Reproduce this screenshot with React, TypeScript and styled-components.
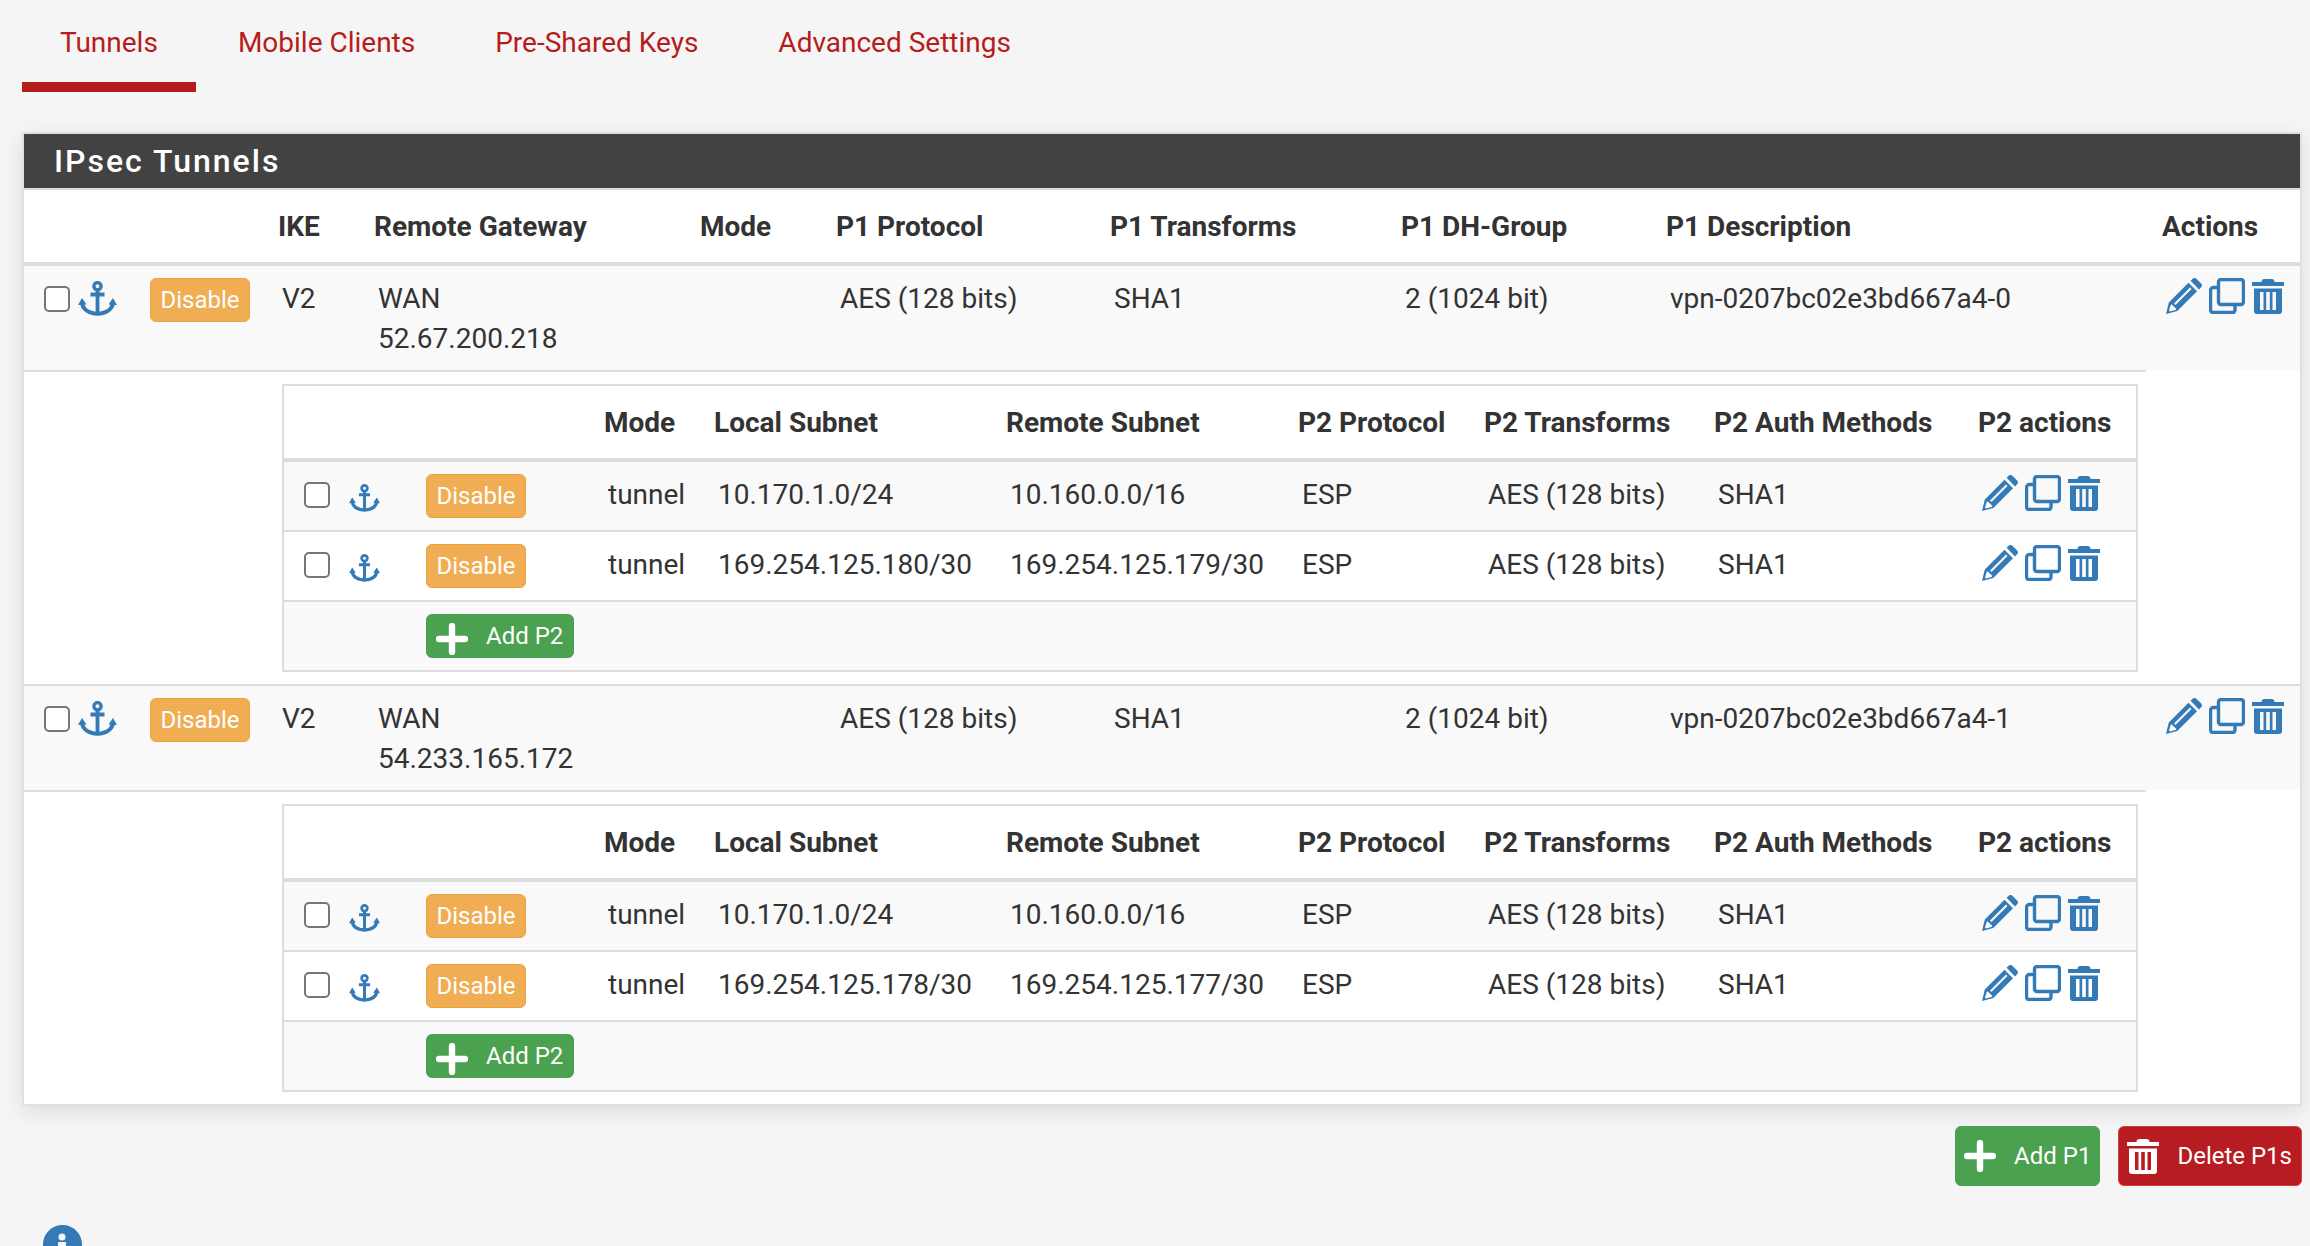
import React from "react";
import styled, { createGlobalStyle } from "styled-components";

const Global = createGlobalStyle`
  html, body { margin: 0; height: 1246px; overflow: hidden; background: #f5f5f5; }
  body { font-family: Roboto, "Liberation Sans", sans-serif; color: #333; }
`;

const Page = styled.div`
  width: 2310px;
  height: 1246px;
  overflow: hidden;
  box-sizing: border-box;
  padding-left: 22px;
`;
const Tabs = styled.nav`
  display: flex;
  gap: 4px;
  height: 92px;
`;
const Tab = styled.a<{ $active?: boolean }>`
  display: block;
  box-sizing: border-box;
  height: 92px;
  padding: 25px 38px 0;
  font-size: 28px;
  line-height: 36px;
  color: #b71c1c;
  border-bottom: 10px solid ${(p) => (p.$active ? "#b71c1c" : "transparent")};
`;
const Panel = styled.section`
  margin-top: 40px;
  width: 2280px;
  box-sizing: border-box;
  border: 2px solid #e0e0e0;
  background: #fff;
  box-shadow: 0 6px 20px rgba(0, 0, 0, 0.1);
`;
const Heading = styled.h2`
  margin: 0;
  height: 56px;
  box-sizing: border-box;
  background: #424242;
  border-bottom: 2px solid #ddd;
  color: #fff;
  padding-left: 30px;
  font-size: 32px;
  font-weight: 500;
  line-height: 54px;
  letter-spacing: 2px;
`;
const Table = styled.table`
  border-collapse: separate;
  border-spacing: 0;
  table-layout: fixed;
  width: 100%;
`;
const Th = styled.th<{ $pad?: number }>`
  text-align: left;
  font-weight: 700;
  font-size: 28px;
  line-height: 40px;
  color: #333;
  white-space: nowrap;
  padding: 17px 0 15px ${(p) => p.$pad ?? 8}px;
  border-bottom: 4px solid #ddd;
  background: #fff;
`;
const Td = styled.td<{ $pad?: number; $noLine?: boolean }>`
  font-size: 28px;
  line-height: 40px;
  color: #333;
  vertical-align: top;
  white-space: nowrap;
  padding: 13px 0 11px ${(p) => p.$pad ?? 12}px;
  border-bottom: 2px solid ${(p) => (p.$noLine ? "#fff" : "#ddd")};
`;
const Row = styled.tr<{ $shade?: boolean }>`
  background: ${(p) => (p.$shade ? "#f9f9f9" : "#fff")};
`;
const DetailCell = styled.td<{ $line?: boolean }>`
  padding: 12px 8px 12px 258px;
  border-bottom: ${(p) => (p.$line ? "2px solid #ddd" : "0")};
`;
const EndCell = styled.td<{ $line?: boolean }>`
  border-bottom: ${(p) => (p.$line ? "2px solid #ddd" : "0")};
`;
const Nested = styled.div`
  border: 2px solid #ddd;
`;
const NestedHead = styled.th`
  text-align: left;
  font-weight: 700;
  font-size: 28px;
  line-height: 40px;
  color: #333;
  white-space: nowrap;
  padding: 17px 0 15px 8px;
  border-bottom: 4px solid #ddd;
`;
const NestedTd = styled.td`
  height: 70px;
  box-sizing: border-box;
  font-size: 28px;
  line-height: 40px;
  color: #333;
  white-space: nowrap;
  vertical-align: top;
  padding: 13px 0 0 12px;
  border-bottom: 2px solid #ddd;
`;
const NestedFoot = styled.td`
  height: 68px;
  box-sizing: border-box;
  padding: 12px 0 12px 142px;
`;
const Controls = styled.div<{ $nested?: boolean }>`
  display: grid;
  grid-template-columns: ${(p) => (p.$nested ? "26px 45px" : "26px 34px")} auto;
  justify-content: start;
  column-gap: ${(p) => (p.$nested ? "19px" : "8px")};
  margin: -1px 0 0 8px;
`;
const Check = styled.input.attrs({ type: "checkbox" })`
  appearance: none;
  width: 26px;
  height: 26px;
  margin: 8px 0 0;
  box-sizing: border-box;
  background: #fff;
  border: 2px solid #767676;
  border-radius: 5px;
`;
const AnchorSvg = styled.svg<{ $small?: boolean }>`
  display: block;
  width: ${(p) => (p.$small ? 31 : 39)}px;
  height: ${(p) => (p.$small ? 28 : 35)}px;
  margin-top: ${(p) => (p.$small ? 10 : 3)}px;
  fill: none;
  stroke: #337ab7;
`;
const DisableBtn = styled.span<{ $nested?: boolean }>`
  display: block;
  width: 100px;
  height: 44px;
  box-sizing: border-box;
  margin-left: ${(p) => (p.$nested ? "13px" : "30px")};
  background: #f0ad54;
  border: 1px solid #eea236;
  border-radius: 6px;
  color: #fff;
  font-size: 24px;
  line-height: 42px;
  text-align: center;
`;
const Btn = styled.span<{ $tone: "add" | "del"; $large?: boolean; $right: number; $left: number }>`
  display: inline-flex;
  align-items: center;
  vertical-align: top;
  box-sizing: border-box;
  height: ${(p) => (p.$large ? 60 : 44)}px;
  padding: 0 ${(p) => p.$right}px 0 ${(p) => p.$left}px;
  border-radius: 6px;
  color: #fff;
  background: ${(p) => (p.$tone === "add" ? "#4aa14f" : "#b71c22")};
  border: 1px solid ${(p) => (p.$tone === "add" ? "#4aa14f" : "#d43f3a")};
  font-size: 24px;
  line-height: 1;
  white-space: nowrap;
`;
const BtnIcon = styled.svg<{ $drop?: boolean }>`
  display: block;
  flex: none;
  fill: #fff;
  margin: ${(p) => (p.$drop ? "5px" : "0")} 18px 0 0;
`;
const Actions = styled.div<{ $outer?: boolean }>`
  display: flex;
  align-items: flex-start;
  gap: 7px;
  height: 36px;
  margin-top: ${(p) => (p.$outer ? -1 : 0)}px;
`;
const Icon = styled.svg<{ $w: number }>`
  display: block;
  flex: none;
  width: ${(p) => p.$w}px;
  height: 36px;
  fill: #337ab7;
`;
const Footer = styled.div`
  display: flex;
  justify-content: flex-end;
  gap: 18px;
  width: 2280px;
  margin-top: 20px;
`;
const InfoWrap = styled.svg`
  display: block;
  width: 39px;
  height: 39px;
  margin: 39px 0 0 21px;
`;

const Anchor = ({ small }: { small?: boolean }) => (
  <AnchorSvg $small={small} viewBox="0 0 39 35">
    <circle cx="19.5" cy="5.2" r="3.6" strokeWidth="3.4" />
    <path d="M19.5 9v23M12.5 13.5h14" strokeWidth="3.800" />
    <path d="M4 21.5c.6 7 7 10.8 15.5 11.3C28 32.300 34.400 28.500 35 21.500" strokeWidth="4" />
    <path d="M0 24l4-7 4.500 6.500zM30.500 23.500l4.500-6.500 4 7z" fill="#337ab7" stroke="none" />
  </AnchorSvg>
);
const Pencil = () => (
  <Icon $w={36} viewBox="0 0 36 36">
    <path d="M0 36l2.800-11.500L22.500 4.800 31 13.300 11.300 33zM4.500 27.500l-1.500 5.200 1 .9 5.300-1.500 1.200-1.200-5-4.600z" fillRule="evenodd" />
    <path d="M24.600 2.800l1.800-1.800a3 3 0 0 1 4.200 0l4.300 4.300a3 3 0 0 1 0 4.200l-1.900 1.900z" />
    <path d="M8 25.500L24 9.500l1.500 1.500L9.500 27z" fill="#f9f9f9" />
  </Icon>
);
const Copy = () => (
  <Icon $w={36} viewBox="0 0 36 36">
    <path d="M8 9.500H4.500a3 3 0 0 0-3 3V32a2.500 2.500 0 0 0 2.500 2.500h19.500A2.500 2.500 0 0 0 26 32v-5.500" fill="none" stroke="#337ab7" strokeWidth="3.400" />
    <rect x="9.500" y="1.500" width="25" height="25" rx="2.500" fill="none" stroke="#337ab7" strokeWidth="3.400" />
  </Icon>
);
const trashPath =
  "M0 4h9.500a3 3 0 0 1 3-3h7a3 3 0 0 1 3 3H32v4H0zM2 10.500h28V33a3 3 0 0 1-3 3H5a3 3 0 0 1-3-3zM8 14v18h3.500V14zM14.200 14v18h3.600V14zM20.500 14v18H24V14z";
const Trash = () => (
  <Icon $w={32} viewBox="0 0 32 36">
    <path d={trashPath} fillRule="evenodd" />
  </Icon>
);
const ActionIcons = ({ outer }: { outer?: boolean }) => (
  <Actions $outer={outer}>
    <Pencil />
    <Copy />
    <Trash />
  </Actions>
);
const Plus = ({ drop }: { drop?: boolean }) => (
  <BtnIcon $drop={drop} width={32} height={32} viewBox="0 0 32 32">
    <path d="M12.800 3a3 3 0 0 1 6.400 0v9.800H29a3 3 0 0 1 0 6.400h-9.800V29a3 3 0 0 1-6.400 0v-9.800H3a3 3 0 0 1 0-6.400h9.800z" />
  </BtnIcon>
);

type P2 = { local: string; remote: string };
type P1 = { gateway: string; desc: string; p2: P2[] };

const tunnels: P1[] = [
  {
    gateway: "52.67.200.218",
    desc: "vpn-0207bc02e3bd667a4-0",
    p2: [
      { local: "10.170.1.0/24", remote: "10.160.0.0/16" },
      { local: "169.254.125.180/30", remote: "169.254.125.179/30" },
    ],
  },
  {
    gateway: "54.233.165.172",
    desc: "vpn-0207bc02e3bd667a4-1",
    p2: [
      { local: "10.170.1.0/24", remote: "10.160.0.0/16" },
      { local: "169.254.125.178/30", remote: "169.254.125.177/30" },
    ],
  },
];

const outerCols = [246, 96, 326, 136, 274, 291, 265, 488, 154];
const innerCols = [312, 110, 292, 292, 186, 230, 264, 166];

const NestedTable = ({ rows }: { rows: P2[] }) => (
  <Nested>
    <Table>
      <colgroup>
        {innerCols.map((w, i) => (
          <col key={i} style={{ width: w }} />
        ))}
      </colgroup>
      <thead>
        <tr>
          <NestedHead />
          <NestedHead>Mode</NestedHead>
          <NestedHead>Local Subnet</NestedHead>
          <NestedHead>Remote Subnet</NestedHead>
          <NestedHead>P2 Protocol</NestedHead>
          <NestedHead>P2 Transforms</NestedHead>
          <NestedHead>P2 Auth Methods</NestedHead>
          <NestedHead>P2 actions</NestedHead>
        </tr>
      </thead>
      <tbody>
        {rows.map((r, i) => (
          <Row key={i} $shade={i % 2 === 0}>
            <NestedTd>
              <Controls $nested>
                <Check />
                <Anchor small />
                <DisableBtn $nested>Disable</DisableBtn>
              </Controls>
            </NestedTd>
            <NestedTd>tunnel</NestedTd>
            <NestedTd>{r.local}</NestedTd>
            <NestedTd>{r.remote}</NestedTd>
            <NestedTd>ESP</NestedTd>
            <NestedTd>AES (128 bits)</NestedTd>
            <NestedTd>SHA1</NestedTd>
            <NestedTd>
              <ActionIcons />
            </NestedTd>
          </Row>
        ))}
        <Row $shade>
          <NestedFoot colSpan={8}>
            <Btn $tone="add" $left={9} $right={10}>
              <Plus drop />
              Add P2
            </Btn>
          </NestedFoot>
        </Row>
      </tbody>
    </Table>
  </Nested>
);

export default function App() {
  return (
    <Page>
      <Global />
      <Tabs>
        <Tab $active>Tunnels</Tab>
        <Tab>Mobile Clients</Tab>
        <Tab>Pre-Shared Keys</Tab>
        <Tab>Advanced Settings</Tab>
      </Tabs>
      <Panel>
        <Heading>IPsec Tunnels</Heading>
        <Table>
          <colgroup>
            {outerCols.map((w, i) => (
              <col key={i} style={{ width: w }} />
            ))}
          </colgroup>
          <thead>
            <tr>
              <Th />
              <Th>IKE</Th>
              <Th>Remote Gateway</Th>
              <Th>Mode</Th>
              <Th>P1 Protocol</Th>
              <Th>P1 Transforms</Th>
              <Th>P1 DH-Group</Th>
              <Th>P1 Description</Th>
              <Th $pad={16}>Actions</Th>
            </tr>
          </thead>
          <tbody>
            {tunnels.map((t, i) => (
              <React.Fragment key={t.desc}>
                <Row $shade>
                  <Td $pad={12}>
                    <Controls>
                      <Check />
                      <Anchor />
                      <DisableBtn>Disable</DisableBtn>
                    </Controls>
                  </Td>
                  <Td>V2</Td>
                  <Td>
                    WAN
                    <br />
                    {t.gateway}
                  </Td>
                  <Td />
                  <Td>AES (128 bits)</Td>
                  <Td>SHA1</Td>
                  <Td>2 (1024 bit)</Td>
                  <Td>{t.desc}</Td>
                  <Td $pad={20} $noLine>
                    <ActionIcons outer />
                  </Td>
                </Row>
                <tr>
                  <DetailCell colSpan={8} $line={i === 0}>
                    <NestedTable rows={t.p2} />
                  </DetailCell>
                  <EndCell $line={i === 0} />
                </tr>
              </React.Fragment>
            ))}
          </tbody>
        </Table>
      </Panel>
      <Footer>
        <Btn $tone="add" $large $left={8} $right={8}>
          <Plus />
          Add P1
        </Btn>
        <Btn $tone="del" $large $left={8} $right={9}>
          <BtnIcon width={32} height={36} viewBox="0 0 32 36">
            <path d={trashPath} fillRule="evenodd" />
          </BtnIcon>
          Delete P1s
        </Btn>
      </Footer>
      <InfoWrap viewBox="0 0 39 39">
        <circle cx="19.500" cy="19.500" r="19.500" fill="#337ab7" />
        <circle cx="19" cy="12" r="3.500" fill="#f5f5f5" />
        <rect x="15" y="17" width="8" height="14" fill="#f5f5f5" />
      </InfoWrap>
    </Page>
  );
}
